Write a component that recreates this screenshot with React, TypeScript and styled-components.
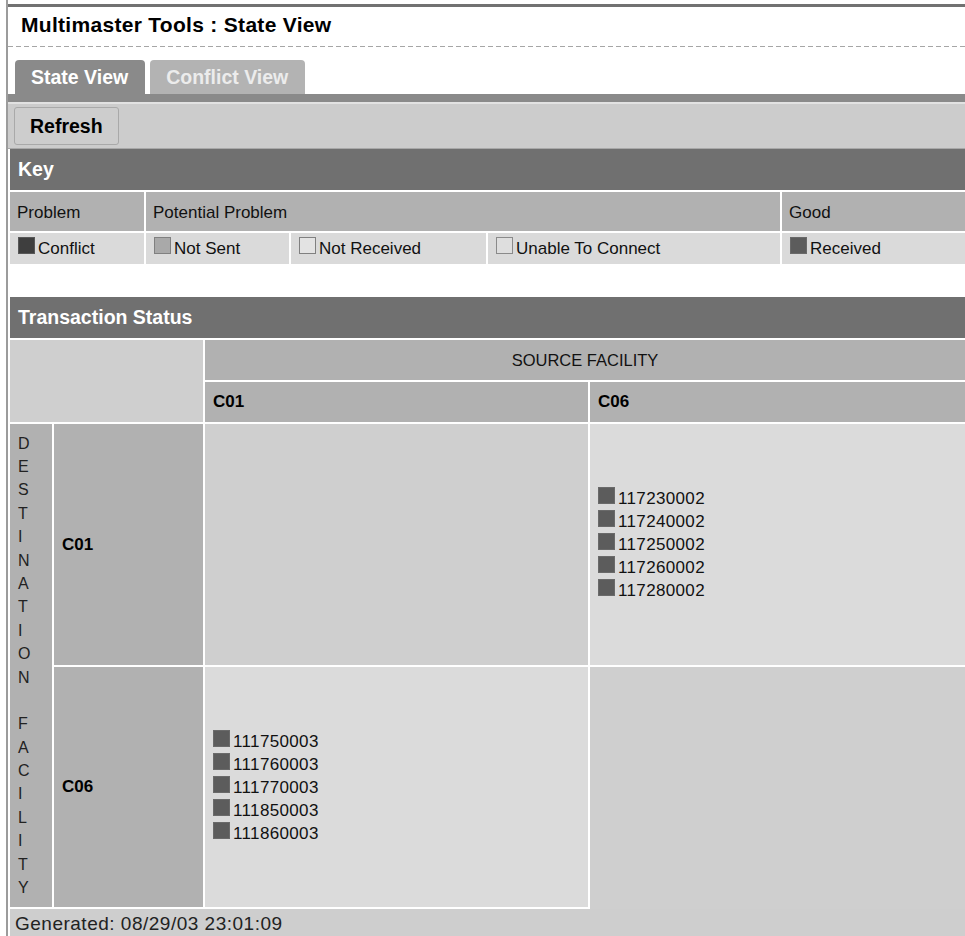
import React from 'react';
import styled, { createGlobalStyle } from 'styled-components';

const GlobalStyle = createGlobalStyle`
  html, body {
    margin: 0;
    padding: 0;
    background: #fff;
    overflow: hidden;
  }
  body {
    font-family: "Liberation Sans", Arial, sans-serif;
    font-size: 17px;
    color: #111;
  }
`;

const Page = styled.div`
  margin-left: 6px;
  padding-top: 4px;
  min-height: 940px;
  border-left: 2px solid #9c9c9c;
`;

const TopRule = styled.div`
  height: 3px;
  background: #717171;
`;

const Title = styled.h1`
  margin: 0;
  height: 39px;
  box-sizing: border-box;
  padding: 0 0 4px 13px;
  line-height: 35px;
  font-size: 21px;
  letter-spacing: 0.3px;
  font-weight: bold;
  color: #000;
`;

const DashedRule = styled.div`
  height: 1px;
  margin-bottom: 13px;
  background: repeating-linear-gradient(to right, #a6a6a6 0 5px, transparent 5px 8px);
`;

const TabStrip = styled.div`
  display: flex;
  gap: 5px;
  padding-left: 7px;
  height: 34px;
`;

const Tab = styled.div<{ $active?: boolean }>`
  height: 34px;
  line-height: 34px;
  padding: 0 17px 0 16px;
  border-radius: 4px 4px 0 0;
  background: ${(p) => (p.$active ? '#8a8a8a' : '#b3b3b3')};
  color: ${(p) => (p.$active ? '#fff' : '#ececec')};
  font-size: 19.5px;
  font-weight: bold;
`;

const TabLine = styled.div`
  height: 8px;
  background: #8a8a8a;
`;

const Toolbar = styled.div`
  height: 44px;
  display: flex;
  align-items: center;
  padding-left: 6px;
  background: #cccccc;
  border-top: 2px solid #e2e2e2;
  border-bottom: 1px solid #a8a8a8;
`;

const Button = styled.button`
  height: 38px;
  padding: 0 15px;
  border: 1px solid #a9a9a9;
  border-radius: 3px;
  background: #cdcdcd;
  color: #000;
  font: bold 19.5px "Liberation Sans", Arial, sans-serif;
  cursor: pointer;
`;

const Body = styled.div`
  padding-left: 2px;
`;

const KeyGrid = styled.div`
  display: grid;
  grid-template-columns: 134px 143px 195px 292px 1fr;
  grid-template-rows: 41px 39px 31px;
  gap: 2px;
  margin-bottom: 33px;
  background: #fff;
`;

const SectionHeader = styled.div`
  grid-column: 1 / -1;
  display: flex;
  align-items: center;
  padding-left: 8px;
  background: #707070;
  color: #fff;
  font-size: 19.5px;
  font-weight: bold;
`;

const KeyGroup = styled.div<{ $span?: number }>`
  grid-column: span ${(p) => p.$span ?? 1};
  display: flex;
  align-items: center;
  padding: 2px 0 0 7px;
  background: #b1b1b1;
`;

const KeyItem = styled.div`
  padding-left: 8px;
  line-height: 31px;
  background: #dadada;
  white-space: nowrap;
`;

const Swatch = styled.span<{ $fill: string; $edge: string }>`
  display: inline-block;
  width: 15px;
  height: 15px;
  margin-right: 3px;
  border: 1px solid ${(p) => p.$edge};
  background: ${(p) => p.$fill};
`;

const StatusGrid = styled.div`
  display: grid;
  grid-template-columns: 42px 149px 383px 1fr;
  grid-template-rows: 41px 40px 40px 241px 240px 30px;
  gap: 2px;
  background: #fff;
`;

const Corner = styled.div`
  grid-column: 1 / 3;
  grid-row: 2 / 4;
  background: #cfcfcf;
`;

const SourceHead = styled.div`
  grid-column: 3 / 5;
  grid-row: 2;
  display: flex;
  align-items: center;
  justify-content: center;
  background: #b1b1b1;
  font-size: 16.5px;
`;

const ColHead = styled.div<{ $col: number }>`
  grid-column: ${(p) => p.$col};
  grid-row: 3;
  display: flex;
  align-items: center;
  padding-left: 8px;
  background: #b1b1b1;
  font-weight: bold;
  color: #000;
`;

const AxisLabel = styled.div`
  grid-column: 1;
  grid-row: 4 / 6;
  display: flex;
  flex-direction: column;
  justify-content: center;
  padding-left: 8px;
  background: #b1b1b1;
  font-size: 16px;
  color: #222;
`;

const AxisLetter = styled.span`
  height: 23.4px;
  line-height: 23.4px;
`;

const RowHead = styled.div<{ $row: number }>`
  grid-column: 2;
  grid-row: ${(p) => p.$row};
  display: flex;
  align-items: center;
  padding-left: 8px;
  background: #b1b1b1;
  font-weight: bold;
  color: #000;
`;

const DataCell = styled.div<{ $col: number; $row: number; $diag?: boolean; $open?: boolean }>`
  grid-column: ${(p) => p.$col};
  grid-row: ${(p) => p.$row};
  display: flex;
  flex-direction: column;
  justify-content: center;
  padding-left: 8px;
  background: ${(p) => (p.$diag ? '#cfcfcf' : '#dbdbdb')};
  box-shadow: ${(p) => (p.$open ? '0 2px 0 #cfcfcf' : 'none')};
`;

const TxnLine = styled.div`
  line-height: 23px;
  letter-spacing: 0.35px;
`;

const Footer = styled.div`
  grid-column: 1 / -1;
  padding-left: 5px;
  line-height: 30px;
  background: #cecece;
  font-size: 19px;
  letter-spacing: 0.5px;
  color: #222;
`;

type Legend = { label: string; fill: string; edge: string };

const legend: Legend[] = [
  { label: 'Conflict', fill: '#3e3e3e', edge: '#585858' },
  { label: 'Not Sent', fill: '#a9a9a9', edge: '#808080' },
  { label: 'Not Received', fill: '#e3e3e3', edge: '#808080' },
  { label: 'Unable To Connect', fill: '#dedede', edge: '#8a8a8a' },
  { label: 'Received', fill: '#5c5c5c', edge: '#6a6a6a' },
];

const facilities = ['C01', 'C06'];

// transactions received at [destination][source]
const received: Record<string, Record<string, string[]>> = {
  C01: { C06: ['117230002', '117240002', '117250002', '117260002', '117280002'] },
  C06: { C01: ['111750003', '111760003', '111770003', '111850003', '111860003'] },
};

const axisText = 'DESTINATION FACILITY';

export default function App() {
  return (
    <>
      <GlobalStyle />
      <Page>
        <TopRule />
        <Title>Multimaster Tools : State View</Title>
        <DashedRule />
        <TabStrip>
          <Tab $active>State View</Tab>
          <Tab>Conflict View</Tab>
        </TabStrip>
        <TabLine />
        <Toolbar>
          <Button type="button">Refresh</Button>
        </Toolbar>
        <Body>
          <KeyGrid>
            <SectionHeader>Key</SectionHeader>
            <KeyGroup>Problem</KeyGroup>
            <KeyGroup $span={3}>Potential Problem</KeyGroup>
            <KeyGroup>Good</KeyGroup>
            {legend.map((l) => (
              <KeyItem key={l.label}>
                <Swatch $fill={l.fill} $edge={l.edge} />
                {l.label}
              </KeyItem>
            ))}
          </KeyGrid>

          <StatusGrid>
            <SectionHeader>Transaction Status</SectionHeader>
            <Corner />
            <SourceHead>SOURCE FACILITY</SourceHead>
            {facilities.map((f, i) => (
              <ColHead key={f} $col={i + 3}>
                {f}
              </ColHead>
            ))}
            <AxisLabel>
              {axisText.split('').map((ch, i) => (
                <AxisLetter key={i}>{ch === ' ' ? '\u00a0' : ch}</AxisLetter>
              ))}
            </AxisLabel>
            {facilities.map((dest, r) => (
              <React.Fragment key={dest}>
                <RowHead $row={r + 4}>{dest}</RowHead>
                {facilities.map((src, c) => (
                  <DataCell
                    key={src}
                    $col={c + 3}
                    $row={r + 4}
                    $diag={src === dest}
                    $open={src === dest && r === facilities.length - 1}
                  >
                    {(received[dest]?.[src] ?? []).map((t) => (
                      <TxnLine key={t}>
                        <Swatch $fill="#5c5c5c" $edge="#6a6a6a" />
                        {t}
                      </TxnLine>
                    ))}
                  </DataCell>
                ))}
              </React.Fragment>
            ))}
            <Footer>Generated: 08/29/03 23:01:09</Footer>
          </StatusGrid>
        </Body>
      </Page>
    </>
  );
}
